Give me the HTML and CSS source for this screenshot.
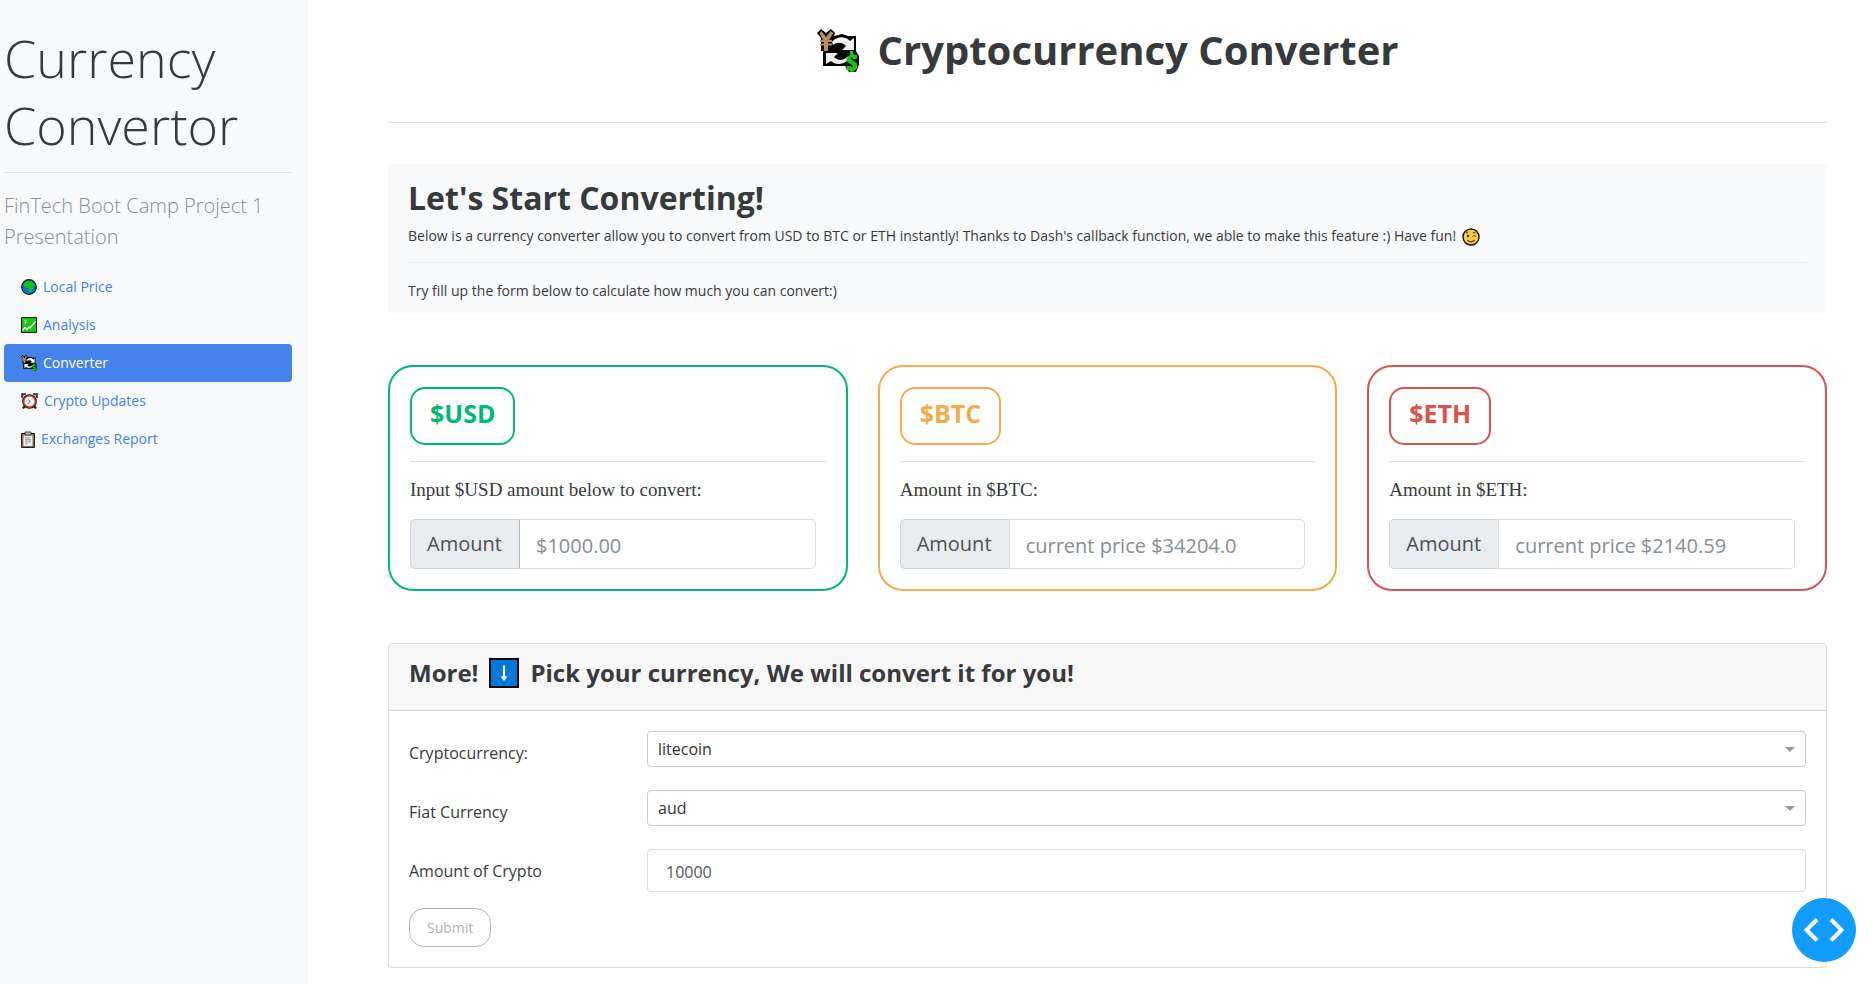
FILE: index.html
```html
<!DOCTYPE html>
<html lang="en">
<head>
<meta charset="utf-8">
<meta name="viewport" content="width=device-width, initial-scale=1">
<title>Cryptocurrency Converter</title>
<link rel="stylesheet" href="styles.css">
</head>
<body>
<svg class="sprite" aria-hidden="true">
  <symbol id="exchange" viewBox="7 6 43 43">
    <path d="M7 10l4-4 5 4 5-4 4 4-1 3 8-2 6 2h8v15l3 5v9l-3 7h-7l-4-6H13V28h-2V15z" fill="#000"/>
    <circle cx="29" cy="28" r="7" fill="#000"/>
    <path d="M22 19c5-6 13-6 18-1l4-3v12H32l4-4c-4-4-9-4-13-1z" fill="#f1f1f1"/>
    <path d="M38 37c-5 5-13 5-17 1l-5 3V30h12l-4 4c4 4 9 4 13 0z" fill="#f1f1f1"/>
    <path d="M9.500 10l2-2 4.500 6 4.500-6 3 2-4.500 7h3v2h-4v1.500h4v2h-4V28h-4v-5.500h-4v-2h4V19h-4v-2h3z" fill="#b98d5e"/>
    <path d="M40 28h3v3l4 1v4h-4l-1-1.500-1.500 1.500 6.500 4v6l-3.500 2v2.500h-3V48l-4-1v-4h4l1.500 1.500 1.500-1.500-7-4.500V34l3.500-2z" fill="#16c60c"/>
  </symbol>
</svg>
<div class="layout">
  <aside class="sidebar">
    <h2 class="brand">Currency Convertor</h2>
    <hr class="rule">
    <p class="lead">FinTech Boot Camp Project 1 Presentation</p>
    <nav class="menu">
      <a class="menu-link" href="#local">
        <svg class="menu-icon" viewBox="0 0 16 16" aria-hidden="true"><circle cx="8" cy="8" r="7.300" fill="#0078d7" stroke="#111" stroke-width="1.200"/><path d="M3.500 4l2.500-2 3.500.5 1-.5 3 3 .5 2-2 .5-.5 2.500-2 3.500-1.500-1-.5-3.500L4.500 8.500 3 6.500z" fill="#16c60c"/></svg>
        Local Price</a>
      <a class="menu-link" href="#analysis">
        <svg class="menu-icon" viewBox="0 0 16 16" aria-hidden="true"><path d="M.5.5h15v15H.5z" fill="#16c60c" stroke="#111"/><path d="M1.500 13.500l2.500-3L6 12.500 8 10l1 1 5.500-6.500" fill="none" stroke="#fff" stroke-width="1.300"/><path d="M3 2.500l1.500 2L6 2.500M4.500 4.500v3M3 5.500h3" fill="none" stroke="#bff5bb" stroke-width=".8"/></svg>
        Analysis</a>
      <a class="menu-link menu-link-active" href="#converter" aria-current="page">
        <svg class="menu-icon" aria-hidden="true"><use href="#exchange"/></svg>
        Converter</a>
      <a class="menu-link" href="#updates">
        <svg class="menu-icon menu-icon-wide" viewBox="0 0 17 16" aria-hidden="true"><path d="M1 5V1h4M16 5V1h-4" stroke="#222" stroke-width="1.600" fill="#aaa"/><path d="M4 13l-2 2.500M13 13l2 2.500" stroke="#222" stroke-width="2.200"/><circle cx="8.500" cy="8.500" r="6.300" fill="#f7f7f7" stroke="#111" stroke-width="2"/><circle cx="8.500" cy="8.500" r="5.800" fill="#f7f7f7" stroke="#e0331b" stroke-width="1.400"/><path d="M7 6.500l2.300 2L7 10.500" fill="none" stroke="#444" stroke-width=".9"/></svg>
        Crypto Updates</a>
      <a class="menu-link" href="#report">
        <svg class="menu-icon menu-icon-narrow" viewBox="0 0 14 17" aria-hidden="true"><path d="M.6 2.500h12.800v13.900H.6z" fill="#8e6b52" stroke="#111"/><path d="M2.500 4.500h9v10.500h-9z" fill="#f2f2f2"/><path d="M4 1h6v3H4z" fill="#bbb" stroke="#222" stroke-width=".8"/><path d="M4 6.800h5M4 8.800h6M4 10.800h6M4 12.800h2.500" stroke="#888" stroke-width=".9"/></svg>
        Exchanges Report</a>
    </nav>
  </aside>

  <main class="content">
    <h1 class="page-title">
      <svg class="title-icon" aria-hidden="true"><use href="#exchange"/></svg>
      Cryptocurrency Converter
    </h1>
    <hr class="rule">

    <section class="intro">
      <h2 class="intro-title">Let's Start Converting!</h2>
      <p class="intro-text">Below is a currency converter allow you to convert from USD to BTC or ETH instantly! Thanks to Dash's callback function, we able to make this feature :) Have fun!
        <svg class="wink" viewBox="0 0 18 18" aria-hidden="true"><circle cx="9" cy="9" r="8" fill="#ffc83d" stroke="#111" stroke-width="1.400"/><path d="M5.500 12c2 2.500 5 2.500 7 0" fill="none" stroke="#222" stroke-width="1.200"/><circle cx="6" cy="8" r="1.200" fill="#222"/><path d="M10.500 8.500c1-1 2.500-1 3.300 0M4 5l2-1M11 4.500l2.500.5" fill="none" stroke="#222" stroke-width=".9"/></svg>
      </p>
      <hr class="rule rule-soft">
      <p class="intro-text">Try fill up the form below to calculate how much you can convert:)</p>
    </section>

    <div class="cards">
      <section class="card card-usd">
        <h3 class="ticker">$USD</h3>
        <hr class="rule">
        <label class="caption" for="usd">Input $USD amount below to convert:</label>
        <div class="group"><span class="addon">Amount</span><input class="field" id="usd" type="text" placeholder="$1000.00"></div>
      </section>
      <section class="card card-btc">
        <h3 class="ticker">$BTC</h3>
        <hr class="rule">
        <label class="caption" for="btc">Amount in $BTC:</label>
        <div class="group"><span class="addon">Amount</span><input class="field" id="btc" type="text" placeholder="current price $34204.0"></div>
      </section>
      <section class="card card-eth">
        <h3 class="ticker">$ETH</h3>
        <hr class="rule">
        <label class="caption" for="eth">Amount in $ETH:</label>
        <div class="group"><span class="addon">Amount</span><input class="field" id="eth" type="text" placeholder="current price $2140.59"></div>
      </section>
    </div>

    <section class="panel">
      <h3 class="panel-title">More!
        <svg class="down" viewBox="0 0 30 30" aria-hidden="true"><path d="M1 1h28v28H1z" fill="#0078d7" stroke="#000" stroke-width="2"/><path d="M15 7.500v12" stroke="#fff" stroke-width="2.200"/><path d="M11.500 18.500h7L15 23z" fill="#fff"/></svg>
        Pick your currency, We will convert it for you!</h3>
      <form class="form">
        <div class="row">
          <label class="row-label" for="crypto">Cryptocurrency:</label>
          <div class="picker"><select class="select" id="crypto"><option>litecoin</option></select></div>
        </div>
        <div class="row">
          <label class="row-label" for="fiat">Fiat Currency</label>
          <div class="picker"><select class="select" id="fiat"><option>aud</option></select></div>
        </div>
        <div class="row">
          <label class="row-label" for="amount">Amount of Crypto</label>
          <input class="number" id="amount" type="text" value="10000">
        </div>
        <button class="submit" type="button">Submit</button>
      </form>
    </section>
  </main>
</div>
<button class="debug" type="button" aria-label="Toggle debug menu">
  <svg class="debug-icon" viewBox="0 0 42 24" aria-hidden="true"><path d="M14 1.500 3.500 12 14 22.500M28 1.500 38.500 12 28 22.500" fill="none" stroke="#fff" stroke-width="4"/></svg>
</button>
</body>
</html>
```
FILE: styles.css
```css
* { box-sizing: border-box; }

body {
  margin: 0;
  background: #fff;
  color: #373a3c;
  font-family: "Open Sans", "Noto Sans", sans-serif;
  font-size: 16px;
  line-height: 24px;
}

h1, h2, h3, p { margin: 0; }
svg { display: inline-block; }
.sprite { position: absolute; width: 0; height: 0; }

.layout { display: flex; min-height: 100vh; }

.rule {
  width: 100%;
  height: 1px;
  margin: 0;
  border: 0;
  background: #e1e2e3;
}
.rule-soft { background: #e8eaf6; }

.sidebar {
  flex: 0 0 308px;
  padding: 24px 16px 0 4px;
  background: #f8f9fb;
}
.brand {
  margin-bottom: 14px;
  font-size: 52px;
  font-weight: 300;
  line-height: 67px;
}
.lead {
  margin: 17px 0 16px;
  color: #868e96;
  font-size: 20px;
  font-weight: 300;
  line-height: 31px;
}
.menu { display: flex; flex-direction: column; }
.menu-link {
  display: flex;
  align-items: center;
  gap: 6px;
  height: 38px;
  padding: 0 17px;
  border-radius: 4px;
  color: #4582ec;
  font-size: 14px;
  text-decoration: none;
}
.menu-link-active { background: #4582ec; color: #fff; }
.menu-icon { width: 16px; height: 16px; }
.menu-icon-wide { width: 17px; }
.menu-icon-narrow { width: 14px; height: 17px; }

.content {
  flex: 1;
  min-width: 0;
  padding: 20px 45px 15px 80px;
}
.page-title {
  display: flex;
  justify-content: center;
  align-items: center;
  gap: 18px;
  height: 60px;
  margin-bottom: 42px;
  font-size: 40px;
  font-weight: 700;
}
.title-icon { width: 43px; height: 43px; }

.intro {
  margin: 41px 0 52px;
  padding: 15px 20px 11px;
  border-radius: 4px;
  background: #f8f9fb;
}
.intro-title {
  font-size: 32px;
  font-weight: 700;
  line-height: 38px;
}
.intro-text { font-size: 14px; line-height: 22px; }
.intro .intro-title + .intro-text { margin: 8px 0 15px; }
.intro .rule { margin-bottom: 17px; }
.wink { width: 18px; height: 18px; margin-left: 2px; vertical-align: middle; }

.cards {
  display: grid;
  grid-template-columns: repeat(3, minmax(0, 1fr));
  gap: 30px;
}
.card {
  padding: 20px;
  border: 2px solid;
  border-radius: 25px;
}
.card-usd { border-color: #02b875; }
.card-btc { border-color: #f0ad4e; }
.card-eth { border-color: #d9534f; }
.card-usd .ticker { color: #02b875; }
.card-btc .ticker { color: #f0ad4e; }
.card-eth .ticker { color: #d9534f; }
.ticker {
  width: max-content;
  height: 58px;
  margin-bottom: 16px;
  padding: 8px 18px;
  border: 2px solid;
  border-radius: 15px;
  font-size: 25px;
  font-weight: 700;
  line-height: 32px;
}
.caption {
  display: block;
  margin: 16px 0 17px;
  font-family: "Liberation Serif", serif;
  font-size: 19px;
  line-height: 24px;
}
.group { display: flex; height: 50px; margin-right: 10px; }
.addon {
  flex: 0 0 110px;
  padding: 12px 16px;
  border: 1px solid #ced4da;
  border-radius: 5px 0 0 5px;
  background: #e9ecef;
  color: #495057;
  font-size: 20px;
}
.card-usd .addon { border-right-color: #aeb2b7; }
.card:not(.card-usd) .addon { border-right-color: #dde0e3; }
.field {
  flex: 1;
  min-width: 0;
  padding: 2px 16px 0;
  border: 1px solid #ddd;
  border-left-width: 0;
  border-radius: 0 5px 5px 0;
  background: #fff;
  color: #55595c;
  font: 20px "Open Sans", "Noto Sans", sans-serif;
}
.field::placeholder { color: #868e96; opacity: 1; }

.panel {
  margin-top: 52px;
  border: 1px solid #dcdcdc;
  border-radius: 4px;
}
.panel-title {
  display: flex;
  align-items: center;
  gap: 11px;
  padding: 12px 20px 20px;
  border-bottom: 1px solid #d6d6d6;
  background: #f7f7f7;
  font-size: 24px;
  font-weight: 700;
  line-height: 34px;
}
.down { width: 30px; height: 30px; }
.form { padding: 20px; }
.row {
  display: grid;
  grid-template-columns: 238px 1fr;
  align-items: start;
  margin-bottom: 23px;
}
.row-label { padding-top: 10px; font-size: 16px; }
.picker { position: relative; }
.picker::after {
  content: "";
  position: absolute;
  top: 16px;
  right: 11px;
  border: 5px solid transparent;
  border-top-color: #999;
  border-bottom: 0;
  pointer-events: none;
}
.select {
  display: block;
  width: 100%;
  height: 36px;
  padding: 0 10px;
  border: 1px solid #ccc;
  border-radius: 4px;
  background: #fff;
  color: #333;
  font: 16px "Open Sans", "Noto Sans", sans-serif;
  appearance: none;
}
.number {
  width: 100%;
  height: 43px;
  padding: 2px 18px 0;
  border: 1px solid #ddd;
  border-radius: 4px;
  color: #55595c;
  font: 16px "Open Sans", "Noto Sans", sans-serif;
}
.row:nth-child(3) { margin-bottom: 16px; }
.submit {
  display: block;
  height: 39px;
  padding: 0 17px;
  border: 1px solid #adb5bd;
  border-radius: 15px;
  background: transparent;
  color: #adb5bd;
  font: 14px "Open Sans", "Noto Sans", sans-serif;
}

.debug {
  position: fixed;
  right: 16px;
  bottom: 22px;
  display: flex;
  justify-content: center;
  align-items: center;
  width: 64px;
  height: 64px;
  padding: 0;
  border: 0;
  border-radius: 50%;
  background: #119dff;
}
.debug-icon { width: 42px; height: 24px; }
```
